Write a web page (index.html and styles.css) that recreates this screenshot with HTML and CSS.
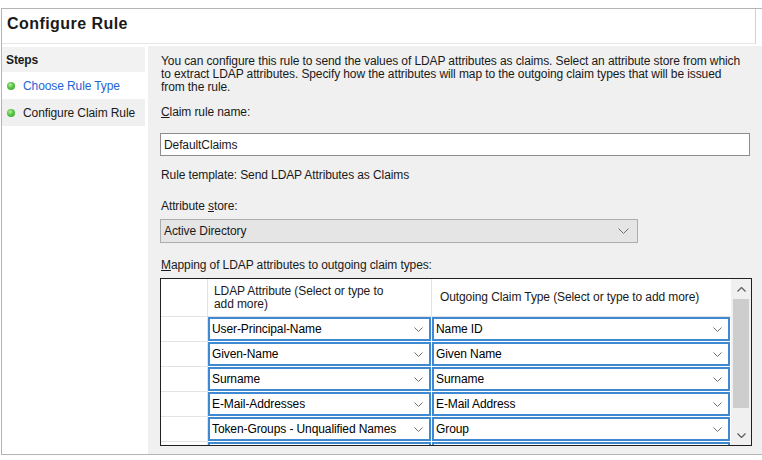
FILE: index.html
```html
<!DOCTYPE html>
<html>
<head>
<meta charset="utf-8">
<link rel="stylesheet" href="styles.css">
</head>
<body>
<div class="frame">
  <div class="title">Configure Rule</div>
  <div class="main">
    <nav class="steps">
      <div class="steps-head">Steps</div>
      <div class="step link"><span class="dot"></span>Choose Rule Type</div>
      <div class="step current"><span class="dot"></span>Configure Claim Rule</div>
    </nav>
    <section class="pane">
      <p class="desc">You can configure this rule to send the values of LDAP attributes as claims. Select an attribute store from which<br>to extract LDAP attributes. Specify how the attributes will map to the outgoing claim types that will be issued<br>from the rule.</p>
      <div class="lbl lbl-name"><u>C</u>laim rule name:</div>
      <div class="input">DefaultClaims</div>
      <div class="lbl lbl-tmpl">Rule template: Send LDAP Attributes as Claims</div>
      <div class="lbl lbl-store">Attribute <u>s</u>tore:</div>
      <div class="select">
        <span>Active Directory</span>
        <svg class="chev" width="11" height="6" viewBox="0 0 11 6"><path d="M0.5 0.5 L5.5 5.5 L10.5 0.5" fill="none" stroke="#707070" stroke-width="1"/></svg>
      </div>
      <div class="lbl lbl-map"><u>M</u>apping of LDAP attributes to outgoing claim types:</div>
      <div class="table">
        <div class="grid">
          <div class="corner"></div>
          <div class="hcell h1">LDAP Attribute (Select or type to<br>add more)</div>
          <div class="hcell h2">Outgoing Claim Type (Select or type to add more)</div>

          <div class="rh"></div>
          <div class="cell"><div class="combo"><span>User-Principal-Name</span><svg class="chev" width="9" height="5" viewBox="0 0 9 5"><path d="M0.5 0.5 L4.5 4.5 L8.5 0.5" fill="none" stroke="#707070"/></svg></div></div>
          <div class="cell"><div class="combo"><span>Name ID</span><svg class="chev" width="9" height="5" viewBox="0 0 9 5"><path d="M0.5 0.5 L4.5 4.5 L8.5 0.5" fill="none" stroke="#707070"/></svg></div></div>

          <div class="rh"></div>
          <div class="cell"><div class="combo"><span>Given-Name</span><svg class="chev" width="9" height="5" viewBox="0 0 9 5"><path d="M0.5 0.5 L4.5 4.5 L8.5 0.5" fill="none" stroke="#707070"/></svg></div></div>
          <div class="cell"><div class="combo"><span>Given Name</span><svg class="chev" width="9" height="5" viewBox="0 0 9 5"><path d="M0.5 0.5 L4.5 4.5 L8.5 0.5" fill="none" stroke="#707070"/></svg></div></div>

          <div class="rh"></div>
          <div class="cell"><div class="combo"><span>Surname</span><svg class="chev" width="9" height="5" viewBox="0 0 9 5"><path d="M0.5 0.5 L4.5 4.5 L8.5 0.5" fill="none" stroke="#707070"/></svg></div></div>
          <div class="cell"><div class="combo"><span>Surname</span><svg class="chev" width="9" height="5" viewBox="0 0 9 5"><path d="M0.5 0.5 L4.5 4.5 L8.5 0.5" fill="none" stroke="#707070"/></svg></div></div>

          <div class="rh"></div>
          <div class="cell"><div class="combo"><span>E-Mail-Addresses</span><svg class="chev" width="9" height="5" viewBox="0 0 9 5"><path d="M0.5 0.5 L4.5 4.5 L8.5 0.5" fill="none" stroke="#707070"/></svg></div></div>
          <div class="cell"><div class="combo"><span>E-Mail Address</span><svg class="chev" width="9" height="5" viewBox="0 0 9 5"><path d="M0.5 0.5 L4.5 4.5 L8.5 0.5" fill="none" stroke="#707070"/></svg></div></div>

          <div class="rh"></div>
          <div class="cell"><div class="combo"><span>Token-Groups - Unqualified Names</span><svg class="chev" width="9" height="5" viewBox="0 0 9 5"><path d="M0.5 0.5 L4.5 4.5 L8.5 0.5" fill="none" stroke="#707070"/></svg></div></div>
          <div class="cell"><div class="combo"><span>Group</span><svg class="chev" width="9" height="5" viewBox="0 0 9 5"><path d="M0.5 0.5 L4.5 4.5 L8.5 0.5" fill="none" stroke="#707070"/></svg></div></div>

          <div class="rh"></div>
          <div class="cell"><div class="combo empty"></div></div>
          <div class="cell"><div class="combo"></div></div>
        </div>
        <div class="scrollbar">
          <div class="sb-btn"><svg width="9" height="5" viewBox="0 0 9 5"><path d="M0.5 4.5 L4.5 0.5 L8.5 4.5" fill="none" stroke="#606060" stroke-width="1.3"/></svg></div>
          <div class="sb-track"><div class="sb-thumb"></div></div>
          <div class="sb-btn"><svg width="9" height="5" viewBox="0 0 9 5"><path d="M0.5 0.5 L4.5 4.5 L8.5 0.5" fill="none" stroke="#606060" stroke-width="1.3"/></svg></div>
        </div>
      </div>
    </section>
  </div>
</div>
</body>
</html>
```

FILE: styles.css
```css
* { box-sizing: border-box; }
html, body { margin: 0; padding: 0; background: #ffffff; }
body {
  font-family: "Liberation Sans", Arial, sans-serif;
  font-size: 12px;
  letter-spacing: -0.1px;
  color: #1a1a1a;
  width: 762px;
  height: 460px;
  overflow: hidden;
}
.frame {
  margin: 8px 0 0 1px;
  border-left: 1px solid #b4b4b4;
  border-top: 1px solid #b4b4b4;
  border-bottom: 1px solid #b4b4b4;
  width: 770px;
  height: 447px;
  display: flex;
  flex-direction: column;
}
.title {
  height: 35px;
  width: 754px;
  border-right: 1px solid #d0d0d0;
  border-bottom: 1px solid #e6e6e6;
  font-weight: bold;
  font-size: 16px;
  letter-spacing: 0.45px;
  padding: 6px 0 0 5px;
  color: #1a1a1a;
}
.main {
  flex: 1;
  display: flex;
  padding-top: 2px;
  min-height: 0;
}
.steps {
  width: 146px;
  padding: 1px 3px 0 0;
  background: #fff;
}
.steps-head {
  height: 25px;
  background: #f2f2f2;
  font-weight: bold;
  padding-left: 4px;
  display: flex;
  align-items: center;
}
.step {
  height: 27px;
  display: flex;
  align-items: center;
  padding-left: 5px;
}
.step.link { color: #2464d4; }
.step.current { background: #f0f0f0; }
.dot {
  width: 8px;
  height: 8px;
  border-radius: 50%;
  margin-right: 8px;
  background: radial-gradient(circle at 40% 35%, #b8f0a0 0%, #5cc64a 40%, #2f9a2a 100%);
}
.pane {
  flex: 1;
  background: #f0f0f0;
  padding: 9px 0 0 12px;
  overflow: hidden;
}
.desc {
  margin: 0;
  padding-left: 1px;
  line-height: 13px;
  white-space: nowrap;
}
.lbl {
  padding-left: 1px;
  line-height: 13px;
  white-space: nowrap;
}
.lbl u { text-decoration: underline; text-underline-offset: 1px; }
.lbl-name { margin-top: 12px; }
.input {
  margin-top: 14px;
  width: 590px;
  height: 23px;
  background: #fff;
  border: 1px solid #8c8c8c;
  padding: 0 0 0 3px;
  display: flex;
  align-items: center;
}
.lbl-tmpl { margin-top: 13px; }
.lbl-store { margin-top: 18px; }
.select {
  margin-top: 6px;
  width: 478px;
  height: 24px;
  background: #e5e5e5;
  border: 1px solid #adadad;
  display: flex;
  align-items: center;
  justify-content: space-between;
  padding: 0 8px 0 3px;
}
.lbl-map { margin-top: 16px; }
.table {
  margin-top: 6px;
  width: 592px;
  height: 168px;
  border: 1px solid #202020;
  background: #fff;
  display: flex;
}
.grid {
  width: 570px;
  height: 166px;
  overflow: hidden;
  display: grid;
  grid-template-columns: 47px 224px 299px;
  grid-template-rows: 38px;
  grid-auto-rows: 25px;
}
.corner {
  border-right: 1px solid #e3e3e3;
  border-bottom: 1px solid #e3e3e3;
}
.hcell {
  border-bottom: 1px solid #e3e3e3;
  display: flex;
  align-items: center;
  line-height: 13px;
  color: #1a1a1a;
}
.h1 { padding-left: 6px; border-right: 1px solid #e3e3e3; }
.h2 { padding-left: 8px; }
.rh {
  border-right: 1px solid #e3e3e3;
  border-bottom: 1px solid #e3e3e3;
}
.cell {
  padding: 0 1px 1px 0;
}
.combo {
  height: 24px;
  border: 2px solid #3f88d2;
  background: #fff;
  display: flex;
  align-items: center;
  justify-content: space-between;
  padding: 0 6px 0 2px;
  color: #000;
}
.combo .chev { flex: none; }
.scrollbar {
  width: 20px;
  height: 166px;
  background: #f0f0f0;
  display: flex;
  flex-direction: column;
}
.sb-btn {
  height: 20px;
  display: flex;
  align-items: center;
  justify-content: center;
}
.sb-track {
  flex: 1;
  padding: 0 2px;
}
.sb-thumb {
  height: 109px;
  background: #cdcdcd;
}
```
